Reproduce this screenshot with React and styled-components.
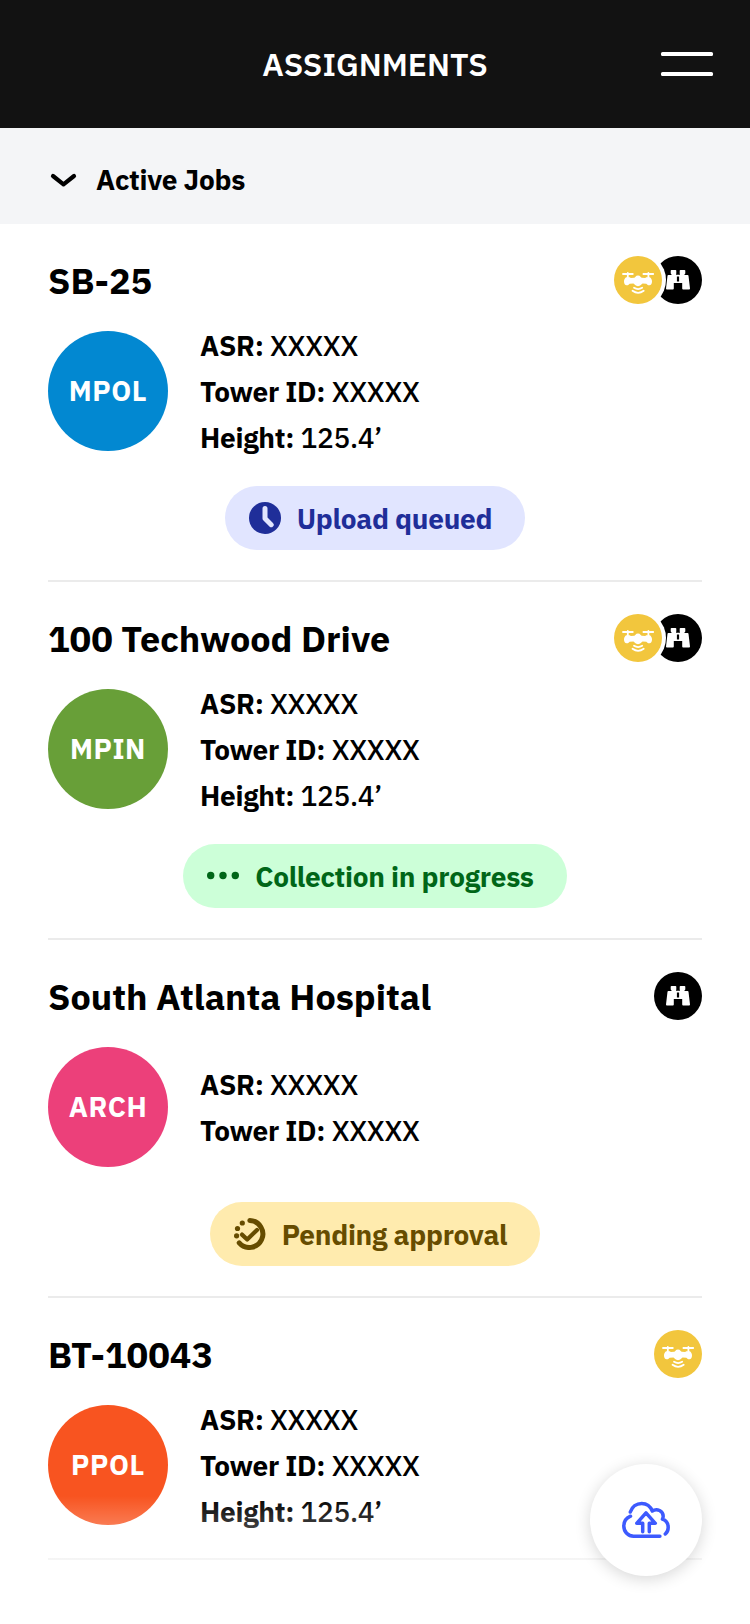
import styled, { createGlobalStyle } from 'styled-components'

const GlobalStyle = createGlobalStyle`
  * {
    box-sizing: border-box;
  }
  body {
    margin: 0;
    background-color: white;
    color: black;
    font-family: 'IBM Plex Sans', 'Noto Sans', sans-serif;
  }
`
const Container = styled.div`
  position: relative;
  width: 750px;
  height: 1624px;
  overflow: hidden;
`
const Header = styled.header`
  display: grid;
  grid-template-columns: 1fr auto 1fr;
  align-items: center;
  height: 128px;
  padding: 0 37px;
  background-color: #121212;
`
const HeaderTitle = styled.h1`
  grid-column: 2;
  margin: 0;
  color: white;
  font-size: 32px;
  font-weight: 600;
`
const MenuButton = styled.button`
  display: flex;
  flex-direction: column;
  justify-self: end;
  gap: 16px;
  padding: 0;
  border: none;
  background: none;
  cursor: pointer;
`
const MenuLine = styled.span`
  width: 52px;
  height: 4px;
  border-radius: 1.5px;
  background-color: white;
`
const Section = styled.div`
  display: flex;
  align-items: center;
  gap: 19px;
  height: 96px;
  padding: 7px 50px 0;
  background-color: #f4f5f7;
`
const SectionTitle = styled.h2`
  margin: 0;
  font-size: 28px;
  font-weight: 700;
  letter-spacing: -0.01em;
`
const List = styled.main`
  padding: 0 48px;
`
const Card = styled.article`
  padding: 32px 0 ${(props) => (props.$last ? '24px' : '30px')};
  border-bottom: 2px solid #ebebeb;
`
const CardTop = styled.div`
  display: flex;
  align-items: center;
  justify-content: space-between;
  height: 48px;
`
const CardTitle = styled.h3`
  margin: 0;
  font-size: 36px;
  font-weight: 700;
`
const Badges = styled.div`
  display: flex;
`
const Badge = styled.span`
  position: relative;
  z-index: ${(props) => (props.$front ? 1 : 0)};
  width: 48px;
  height: 48px;
  border-radius: 50%;
  background-color: ${(props) => props.$color};
  box-shadow: ${(props) => (props.$front ? '0 0 0 4px white' : 'none')};

  & + & {
    margin-left: -8px;
  }
`
const CardBody = styled.div`
  display: flex;
  align-items: center;
  gap: 32px;
  height: 138px;
  margin-top: 18px;
`
const Avatar = styled.div`
  display: flex;
  align-items: center;
  justify-content: center;
  width: 120px;
  height: 120px;
  padding-bottom: 1px;
  border-radius: 50%;
  background-color: ${(props) => props.$color};
  color: white;
  font-size: 28px;
  font-weight: 700;
  letter-spacing: 0.02em;
`
const Details = styled.div`
  padding-top: 2px;
  font-size: 28px;
  font-weight: 500;
  letter-spacing: -0.01em;
  line-height: 46px;
`
const Detail = styled.div`
  b {
    font-weight: 700;
  }
`
const StatusRow = styled.div`
  display: flex;
  justify-content: center;
  margin-top: 26px;
`
const Status = styled.div`
  display: flex;
  align-items: center;
  gap: 16px;
  height: 64px;
  padding: 0 33px 0 24px;
  border-radius: 32px;
  background-color: ${(props) => props.$background};
  color: ${(props) => props.$color};
  font-size: 28px;
  font-weight: 700;
  letter-spacing: -0.01em;
`
const Fade = styled.div`
  position: absolute;
  right: 0;
  bottom: 0;
  left: 0;
  height: 128px;
  background: linear-gradient(rgba(255, 255, 255, 0), white);
`
const UploadButton = styled.button`
  position: absolute;
  right: 48px;
  bottom: 48px;
  display: flex;
  align-items: center;
  justify-content: center;
  width: 112px;
  height: 112px;
  padding: 0;
  border: none;
  border-radius: 50%;
  background-color: white;
  box-shadow: 0 3px 16px rgba(0, 0, 0, 0.16);
  cursor: pointer;
`

const ChevronIcon = () => (
  <svg width='27' height='16' viewBox='0 0 27 16' fill='none' stroke='black' strokeWidth='4.2' strokeLinecap='round' strokeLinejoin='round'>
    <path d='M3 4 13.5 12.3 24 4' />
  </svg>
)

const DroneIcon = () => (
  <svg width='48' height='48' viewBox='0 0 48 48' fill='white'>
    <path d='M9 18h9.8M29.400 18h9.800M13.800 17v6M34.400 17v6M20 31.800q4.100 2.600 8.200 0M18.500 34.800q5.600 4 11.200 0' fill='none' stroke='white' strokeWidth='1.8' strokeLinecap='round' />
    <path d='M12 21.300h3.400c.6 0 .9.6 1.400.6l3.400-.1c.8 0 1.400-2.400 3.800-2.400s3 2.400 3.800 2.400l3.400.1c.5 0 .8-.6 1.400-.6H36c1.400 1.200 2 2.600 2 4.200 0 2-1 3.800-2.600 3.800-1.800 0-2.400-.8-3-1.600l-3.800-.1c-.8.2-2.200 2.600-4.600 2.600s-3.800-2.400-4.600-2.600l-3.800.1c-.6.8-1.200 1.600-3 1.600-1.600 0-2.600-1.800-2.600-3.800 0-1.600.6-3 2-4.200z' />
  </svg>
)

const BinocularsIcon = () => (
  <svg width='48' height='48' viewBox='0 0 48 48' fill='white'>
    <path d='M17.500 14h4a.8.8 0 0 1 .8.8v2.700l-.4 1.300h4.200l-.4-1.300v-2.700a.8.8 0 0 1 .8-.8h4a.8.8 0 0 1 .8.8v2.700L30.200 19h3.400a.9.9 0 0 1 .9.8L36 32.600a.9.9 0 0 1-.9.9h-6a.9.9 0 0 1-.9-.9V27h-8.400v5.600a.9.9 0 0 1-.9.9h-6a.9.9 0 0 1-.9-.9l1.500-12.800a.9.9 0 0 1 .9-.8h3.400l-1.100-1.500v-2.700a.8.8 0 0 1 .8-.8z' />
    <path d='M22.900 20.500h2.200v5h-2.200z' fill='black' />
  </svg>
)

const ClockIcon = () => (
  <svg width='32' height='32' viewBox='0 0 32 32' fill='none'>
    <circle cx='16' cy='16' r='16' fill='currentColor' />
    <path d='M16 6.500v10l6.200 6.200' stroke='#e1e5ff' strokeWidth='5' strokeLinecap='round' strokeLinejoin='round' />
  </svg>
)

const DotsIcon = () => (
  <svg width='32' height='32' viewBox='0 0 32 32' fill='currentColor'>
    <circle cx='3.7' cy='15.5' r='3.7' />
    <circle cx='16' cy='15.5' r='3.7' />
    <circle cx='28.3' cy='15.5' r='3.7' />
  </svg>
)

const PendingIcon = () => (
  <svg width='32' height='32' viewBox='0 0 32 32' fill='none' stroke='currentColor' strokeLinecap='round' strokeLinejoin='round'>
    <path d='M15.800 2.500A13.500 13.500 0 1 1 5.200 24.900' strokeWidth='5' />
    <path d='M8 16.600l5.200 4.900 9.800-9.600' strokeWidth='4.2' />
    <g fill='currentColor' stroke='none'>
      <circle cx='8.3' cy='5' r='2.6' />
      <circle cx='3.5' cy='10.5' r='2.6' />
      <circle cx='2.6' cy='17.8' r='2.6' />
    </g>
  </svg>
)

const CloudIcon = () => (
  <svg width='48' height='48' viewBox='0 0 48 48' fill='none' stroke='#3d5afe' strokeWidth='3.5' strokeLinecap='round' strokeLinejoin='round'>
    <path d='M8.500 20.200C4.300 22 1.800 25.600 1.800 30c0 5.800 4.300 10.300 9.800 10.300h26.300' />
    <path d='M8.300 16C10 10.800 14.600 7.400 19.700 7.400c4.800 0 8.700 2.800 10.600 7.600 4.800-3.200 10.900 0 10.900 5.200 0 1-.3 2-.8 3 3.600 1.200 5.800 4.300 5.800 8.200 0 2.600-1.100 5-2.900 6.600' />
    <path d='M20.700 35.800v-8.500h-6L24 16.800l9.300 10.500h-6v8.500' />
  </svg>
)

const badges = {
  drone: { color: '#f2c63d', icon: <DroneIcon /> },
  binoculars: { color: 'black', icon: <BinocularsIcon /> },
}

const statuses = {
  queued: { label: 'Upload queued', color: '#1f2e99', background: '#e1e5ff', icon: <ClockIcon /> },
  progress: { label: 'Collection in progress', color: '#006618', background: '#ccffd8', icon: <DotsIcon /> },
  pending: { label: 'Pending approval', color: '#664c00', background: '#ffebae', icon: <PendingIcon /> },
}

const jobs = [
  { title: 'SB-25', client: 'MPOL', color: '#0288d1', height: '125.4’', badges: ['drone', 'binoculars'], status: 'queued' },
  { title: '100 Techwood Drive', client: 'MPIN', color: '#689f38', height: '125.4’', badges: ['drone', 'binoculars'], status: 'progress' },
  { title: 'South Atlanta Hospital', client: 'ARCH', color: '#ec407a', badges: ['binoculars'], status: 'pending' },
  { title: 'BT-10043', client: 'PPOL', color: '#f85420', height: '125.4’', badges: ['drone'] },
]

const Job = ({ job, last }) => {
  const status = statuses[job.status]
  return (
    <Card $last={last}>
      <CardTop>
        <CardTitle>{job.title}</CardTitle>
        <Badges>
          {job.badges.map((name, i) => (
            <Badge key={name} $color={badges[name].color} $front={i < job.badges.length - 1}>
              {badges[name].icon}
            </Badge>
          ))}
        </Badges>
      </CardTop>
      <CardBody>
        <Avatar $color={job.color}>{job.client}</Avatar>
        <Details>
          <Detail><b>ASR:</b> XXXXX</Detail>
          <Detail><b>Tower ID:</b> XXXXX</Detail>
          {job.height && <Detail><b>Height:</b> {job.height}</Detail>}
        </Details>
      </CardBody>
      {status && (
        <StatusRow>
          <Status $color={status.color} $background={status.background}>
            {status.icon}
            {status.label}
          </Status>
        </StatusRow>
      )}
    </Card>
  )
}

const App = () => {
  return (
    <Container>
      <GlobalStyle />
      <Header>
        <HeaderTitle>ASSIGNMENTS</HeaderTitle>
        <MenuButton aria-label='Menu'>
          <MenuLine />
          <MenuLine />
        </MenuButton>
      </Header>
      <Section>
        <ChevronIcon />
        <SectionTitle>Active Jobs</SectionTitle>
      </Section>
      <List>
        {jobs.map((job, i) => (
          <Job key={job.title} job={job} last={i === jobs.length - 1} />
        ))}
      </List>
      <Fade />
      <UploadButton aria-label='Upload'>
        <CloudIcon />
      </UploadButton>
    </Container>
  )
}

export default App
